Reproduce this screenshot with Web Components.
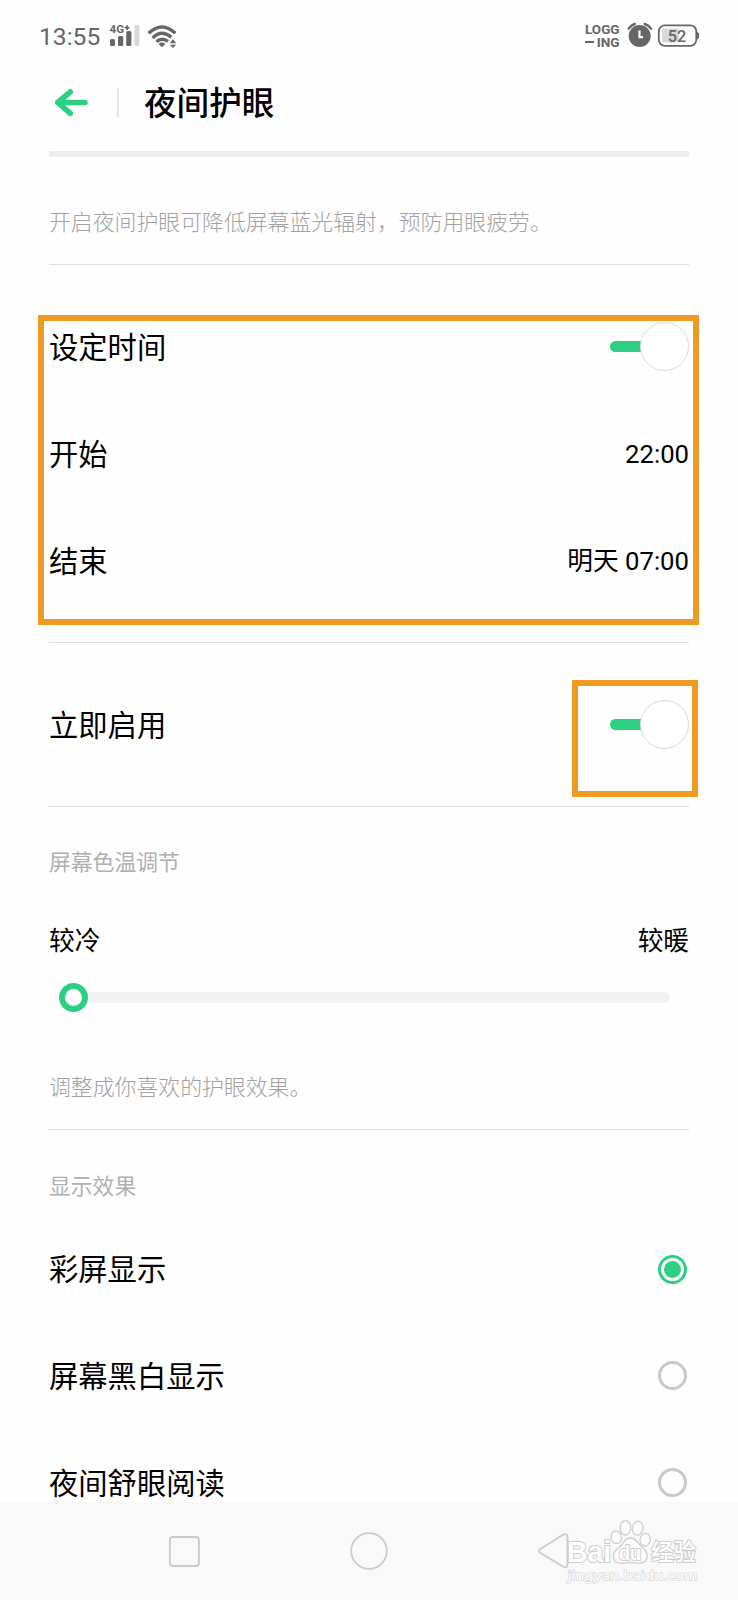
<!DOCTYPE html>
<html lang="zh-CN">
<head>
<meta charset="utf-8">
<title>夜间护眼</title>
<style>
html,body{margin:0;padding:0;background:#fefefe}
body{width:738px;height:1600px;overflow:hidden;color:#000;font-family:Roboto,"Noto Sans CJK SC",sans-serif}
</style>
</head>
<body>
<night-shield-page></night-shield-page>
<script>
function define(name, html) {
  const t = document.createElement('template');
  t.innerHTML = html;
  customElements.define(name, class extends HTMLElement {
    constructor() {
      super();
      this.attachShadow({mode: 'open'}).appendChild(t.content.cloneNode(true));
    }
  });
}

define('status-bar', `
<style>
:host{display:flex;height:70px;box-sizing:border-box;padding:10px 38px 0 39px;align-items:flex-start;color:#666}
.clock{font-size:24.6px;line-height:53px;height:52px;width:69px;white-space:nowrap}
.gap{flex:1}
svg{display:block;height:50px}
text{font-family:Roboto,sans-serif;fill:#666}
</style>
<div class="clock">13:55</div>
<svg width="72" height="50" viewBox="108 10 72 50" fill="#666">
  <text x="109.5" y="33" font-size="11" font-weight="700" textLength="14.5" lengthAdjust="spacingAndGlyphs">4G</text>
  <path d="M124.7 27.6h4.8M127.1 25.2v4.8" stroke="#666" stroke-width="1.7"/>
  <rect x="110" y="39" width="5" height="7" rx="1.6"/><rect x="118" y="36" width="5.2" height="10" rx="1.6"/>
  <rect x="126.200" y="31" width="5.200" height="15" rx="1.6"/><rect x="134.400" y="25" width="5" height="21" rx="1.4" fill="#d8d8d8"/>
  <g fill="none" stroke="#666" stroke-width="3.4">
    <path d="M148.600 33.200Q162 20.700 175.300 33.200"/><path d="M152.600 37.900Q162 28.900 171.300 37.300"/><path d="M156.500 41.800Q162 36.800 168 41.300"/>
  </g>
  <path d="M158.500 44Q162 41.200 165.300 44L162 47.200Z"/>
  <path d="M169.800 43.200L173 39.300 176.200 43.200ZM169.800 44.700H176.200L173 48Z"/>
</svg>
<div class="gap"></div>
<svg width="120" height="50" viewBox="580 10 120 50" fill="#666">
  <text x="585" y="33.900" font-size="13.300" font-weight="700" textLength="34.500" lengthAdjust="spacingAndGlyphs">LOGG</text>
  <text x="596.700" y="46.900" font-size="13.300" font-weight="700" textLength="22.800" lengthAdjust="spacingAndGlyphs">ING</text>
  <rect x="585" y="41" width="9" height="2"/>
  <circle cx="639.700" cy="36" r="11"/>
  <path d="M639.500 30.500V37.200H643" fill="none" stroke="#fff" stroke-width="2.200"/>
  <path d="M628.700 28.600Q631 25.300 634.700 24M644.700 24Q648.700 25.300 651 28.600" fill="none" stroke="#666" stroke-width="2.500" stroke-linecap="round"/>
  <rect x="662" y="28.500" width="17" height="14" rx="2.500" fill="#d8d8d8"/>
  <rect x="658.800" y="25.300" width="37.500" height="20.500" rx="6" fill="none" stroke="#666" stroke-width="1.800"/>
  <path d="M697 32.300h1.300v1h.8v4.600h-.8v1H697Z"/>
  <text x="667.800" y="41.700" font-size="16" font-weight="500" textLength="18.500" lengthAdjust="spacingAndGlyphs">52</text>
</svg>`);

define('page-header', `
<style>
:host{display:flex;height:81px;box-sizing:border-box;padding:7px 0 0 54px;align-items:flex-start}
svg{display:block;width:36px;height:50px}
.sep{width:2px;height:29px;background:#e4e4e4;margin:11px 25px 0 27px}
h1{margin:0;font-size:32.6px;line-height:50px;font-weight:500;padding-top:1.500px}
</style>
<svg viewBox="0 0 36 50"><path d="M31.500 25.500H4.500M16.800 14.800L4.300 25.500 16.800 36.300" transform="translate(-.5 0)" fill="none" stroke="#2dd083" stroke-width="5.600" stroke-linecap="round" stroke-linejoin="round"/></svg>
<div class="sep"></div><h1><slot></slot></h1>`);

define('page-rule', `
<style>:host{display:block;height:1px;margin:0 49px;background:#dfdfdf}:host([thick]){height:6px;background:#ededed}</style>`);

define('hint-text', `
<style>
:host{display:block;padding:0 49px;font-size:21.800px;line-height:32px;height:32px;color:#b0b0b0;white-space:nowrap}
:host([light]){font-weight:300;color:#a2a2a2;font-size:21.860px}
</style><slot></slot>`);

define('setting-row', `
<style>
:host{display:flex;height:106.700px;padding:0 49px;align-items:center;justify-content:space-between;font-size:29.300px;line-height:44px}
span{padding-top:2.600px}
:host([small]) span{padding-top:1px}
:host([small]){height:40px;font-size:25.700px;line-height:40px}
::slotted(span){font-size:25.700px;padding-top:1.400px}
:host([small]) ::slotted(span){padding-top:1px}
</style>
<span><slot></slot></span><slot name="end"></slot>`);

define('toggle-switch', `
<style>
:host{display:flex;align-items:center;width:79px;height:49px}
.track{width:36px;height:11px;border-radius:6px 0 0 6px;background:#2dd083}
.knob{box-sizing:border-box;width:49px;height:49px;border:1.200px solid #dadada;border-radius:50%;background:#fff;margin-left:-6.500px}
</style><div class="track"></div><div class="knob"></div>`);

define('radio-dot', `
<style>
:host{box-sizing:border-box;display:grid;place-items:center;width:29px;height:29px;border:3px solid #c9c9c9;border-radius:50%;margin-right:2px}
:host([checked]){border-color:#2dd083}
:host([checked])::before{content:"";width:17px;height:17px;border-radius:50%;background:#2dd083}
</style>`);

define('warmth-slider', `
<style>
:host{display:flex;align-items:center;height:29px;padding:0 68px 0 59px}
.thumb{box-sizing:border-box;width:29px;height:29px;border:6px solid #2dd083;border-radius:50%;flex:none;background:#fff;z-index:1}
.track{flex:1;height:11px;background:#f2f2f2;border-radius:0 6px 6px 0;margin-left:-2px}
</style><div class="thumb"></div><div class="track"></div>`);

define('nav-bar', `
<style>
:host{display:block;position:absolute;left:0;right:0;bottom:0;height:98.500px;background:#f9f9f9}
svg{display:block}
.mark{font-family:"Liberation Sans",sans-serif;font-weight:700;fill:#fdfdfd;stroke:#cdcdcd;stroke-width:2px;paint-order:stroke}
.url{font-family:"Noto Sans",sans-serif;fill:#fff;stroke:#d9d9d9;stroke-width:1.400px;paint-order:stroke}
</style>
<svg width="738" height="98.500" viewBox="0 1501.500 738 98.500">
  <g fill="none" stroke="#cbcbcb" stroke-width="1.800">
    <rect x="169.900" y="1536.500" width="29" height="29" rx="3"/>
    <circle cx="369" cy="1550.500" r="17.800"/>
    <path d="M540 1548.700L563 1534.200Q567.500 1532.500 567.500 1536.500V1563.500Q567.500 1568.500 563 1566L540 1552.300Q537.500 1550.500 540 1548.700Z"/>
  </g>
  <text class="mark" x="567" y="1561" font-size="29" textLength="44" lengthAdjust="spacingAndGlyphs">Bai</text>
  <g fill="#fbfbfb" stroke="#cfcfcf" stroke-width="1.300">
    <ellipse cx="616.300" cy="1536.700" rx="5.300" ry="6.300" transform="rotate(-12 616.300 1536.700)"/>
    <ellipse cx="625.500" cy="1527.300" rx="5.300" ry="7.200"/>
    <ellipse cx="637.700" cy="1527.700" rx="5.300" ry="7" transform="rotate(10 637.700 1527.700)"/>
    <ellipse cx="645.200" cy="1539.200" rx="5.200" ry="6.300" transform="rotate(8 645.200 1539.200)"/>
    <path d="M630 1537.500C637 1537.500 637.500 1543.500 643 1547.500C649 1552 649 1562.500 639.500 1562.700C635 1562.500 633 1562 630 1562C627 1562 625 1563 620 1562.700C611 1562 612 1551.500 618.500 1547.500C624 1544 623 1538 630 1537.500Z"/>
  </g>
  <text class="mark" x="619" y="1559" font-size="20" textLength="22" lengthAdjust="spacingAndGlyphs">du</text>
  <text class="mark" x="651" y="1559.500" font-size="22.500" style="font-family:'Noto Sans CJK SC',sans-serif;font-weight:500;stroke-width:1.800px">经验</text>
  <text class="url" x="567.500" y="1579" font-size="13" textLength="130" lengthAdjust="spacingAndGlyphs">jingyan.baidu.com</text>
</svg>`);

define('focus-frame', `
<style>
:host{position:absolute;box-sizing:border-box;border:6px solid #ee9b22;pointer-events:none}
:host([area=schedule]){left:38px;top:315px;width:661px;height:310px}
:host([area=enable]){left:571.500px;top:680px;width:126.500px;height:116.500px}
</style>`);

define('night-shield-page', `
<style>
:host{display:block;position:relative;width:738px;height:1600px;overflow:hidden;background:#fefefe}
section{display:flow-root}
</style>
<status-bar></status-bar>
<page-header>夜间护眼</page-header>
<page-rule thick></page-rule>
<hint-text light style="margin:49.500px 0 25.500px">开启夜间护眼可降低屏幕蓝光辐射，预防用眼疲劳。</hint-text>
<page-rule></page-rule>
<section style="height:377px">
  <setting-row style="margin-top:28.500px">设定时间<toggle-switch slot="end"></toggle-switch></setting-row>
  <setting-row>开始<span slot="end">22:00</span></setting-row>
  <setting-row>结束<span slot="end">明天 07:00</span></setting-row>
</section>
<page-rule></page-rule>
<section style="height:163px">
  <setting-row style="margin-top:28px">立即启用<toggle-switch slot="end"></toggle-switch></setting-row>
</section>
<page-rule></page-rule>
<section style="height:322px">
  <hint-text style="margin-top:40px">屏幕色温调节</hint-text>
  <setting-row small style="margin-top:41px">较冷<span slot="end">较暖</span></setting-row>
  <warmth-slider style="margin-top:23px"></warmth-slider>
  <hint-text light style="margin-top:59.500px">调整成你喜欢的护眼效果。</hint-text>
</section>
<page-rule></page-rule>
<section>
  <hint-text style="margin-top:40.500px">显示效果</hint-text>
  <setting-row style="margin-top:13.300px">彩屏显示<radio-dot slot="end" checked></radio-dot></setting-row>
  <setting-row>屏幕黑白显示<radio-dot slot="end"></radio-dot></setting-row>
  <setting-row>夜间舒眼阅读<radio-dot slot="end"></radio-dot></setting-row>
</section>
<nav-bar></nav-bar>
<focus-frame area="schedule"></focus-frame>
<focus-frame area="enable"></focus-frame>`);
</script>
</body>
</html>
